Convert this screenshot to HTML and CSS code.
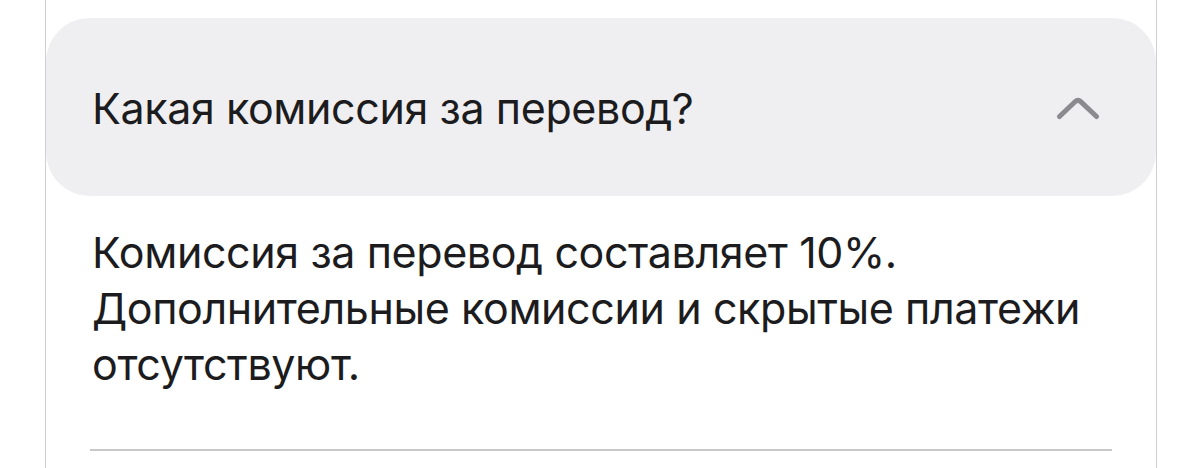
FILE: index.html
```html
<!DOCTYPE html>
<html lang="ru">
<head>
<meta charset="utf-8">
<link rel="stylesheet" href="styles.css">
</head>
<body>
<div class="faq">
  <div class="faq-head">
    <span class="faq-q">Какая комиссия за перевод?</span>
    <svg class="chev" width="44" height="26" viewBox="0 0 44 26" aria-hidden="true">
      <path d="M3.5 21.5 L19 6.8 Q22 4 25 6.8 L40.5 21.5" fill="none" stroke="#8a8a8f" stroke-width="5" stroke-linecap="round" stroke-linejoin="round"/>
    </svg>
  </div>
  <p class="faq-a">Комиссия за перевод составляет 10%. Дополнительные комиссии и скрытые платежи отсутствуют.</p>
  <div class="divider"></div>
</div>
</body>
</html>
```
FILE: styles.css
```css
html, body {
  margin: 0;
  padding: 0;
  background: #ffffff;
}
body {
  font-family: "Inter", "Roboto", "Liberation Sans", sans-serif;
  color: #1c1c1e;
  height: 468px;
  overflow: hidden;
}
.faq {
  margin-left: 45px;
  width: 1112px;
  height: 468px;
  border-left: 1px solid #cfcfd3;
  border-right: 1px solid #cfcfd3;
  padding-top: 18px;
  box-sizing: border-box;
}
.faq-head {
  height: 178px;
  background: #efeff1;
  border-radius: 44px;
  display: flex;
  align-items: center;
  justify-content: space-between;
  padding: 0 56px 0 46px;
}
.faq-q {
  font-size: 43px;
  letter-spacing: -0.4px;
  line-height: 1;
  margin-top: 2px;
}
.chev {
  display: block;
  margin-top: 2px;
}
.faq-a {
  margin: 28px 0 0 46px;
  width: 1020px;
  font-size: 43px;
  line-height: 56px;
  letter-spacing: -0.4px;
}
.divider {
  margin: 57px 0 0 44px;
  width: 1022px;
  height: 2px;
  background: #c7c7cc;
}
```
